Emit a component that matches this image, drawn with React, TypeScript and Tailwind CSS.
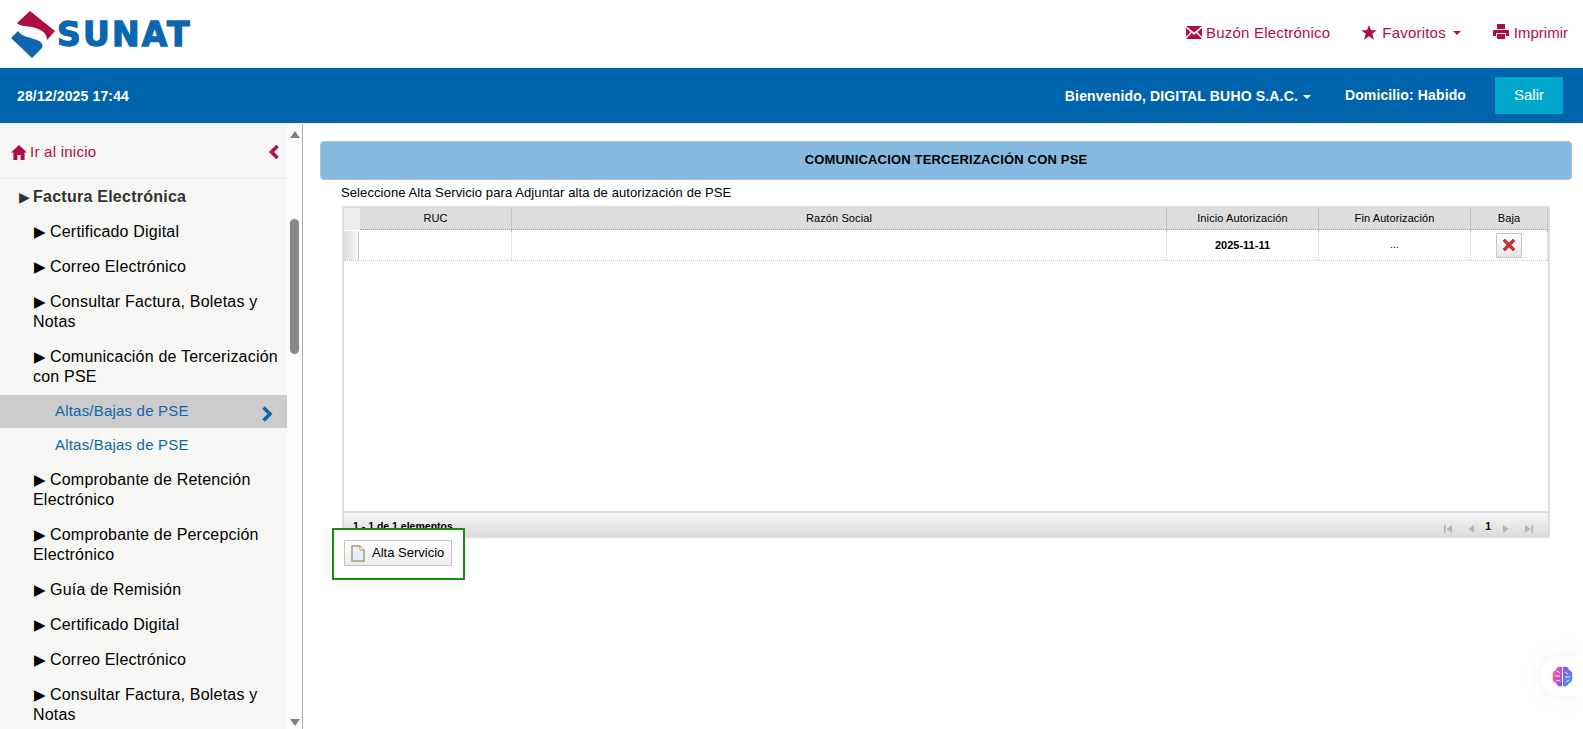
import { Fragment } from "react";

const sans = "font-['Liberation_Sans',Arial,sans-serif]";

const menuItems = [
  { label: "Certificado Digital" },
  { label: "Correo Electrónico" },
  { label: "Consultar Factura, Boletas y Notas" },
  { label: "Comunicación de Tercerización con PSE" },
];

const menuItemsAfter = [
  { label: "Comprobante de Retención Electrónico" },
  { label: "Comprobante de Percepción Electrónico" },
  { label: "Guía de Remisión" },
  { label: "Certificado Digital" },
  { label: "Correo Electrónico" },
  { label: "Consultar Factura, Boletas y Notas" },
];

const columns = [
  { label: "RUC", width: "w-[152px]" },
  { label: "Razón Social", width: "flex-1" },
  { label: "Inicio Autorización", width: "w-[152px]" },
  { label: "Fin Autorización", width: "w-[152px]" },
  { label: "Baja", width: "w-[77px]" },
];

function Logo() {
  return (
    <div className="flex items-center pl-[11px] pt-[1px]">
      <svg width="48" height="50" viewBox="11 9 48 50" className="shrink-0">
        <path d="M30 10 L55 30 L47 39 C47 31 40 28 32 26 C25 25 19 25 17 22 Z" fill="#ad0f43" />
        <path d="M11 37 L18 30 C21 35 28 36 34 38 C41 40 44 43 42 47 L32 57 Z" fill="#0f66ae" />
      </svg>
      <span className="ml-[-2px] mt-[-1px] font-['DejaVu_Sans',sans-serif] text-[33px] leading-none font-bold tracking-[2.2px] text-[#0a66ae] [-webkit-text-stroke:1.3px_#0a66ae]">
        SUNAT
      </span>
    </div>
  );
}

function Caret({ color }: { color: string }) {
  return (
    <span
      className="inline-block h-0 w-0 border-x-[4px] border-t-[4px] border-x-transparent"
      style={{ borderTopColor: color }}
    />
  );
}

function TopNav() {
  return (
    <div className="flex items-center pb-[2px] pr-[15px] text-[15px] text-[#ad0f43]">
      <svg width="16" height="13" viewBox="0 0 16 13" fill="#ad0f43" className="mr-[4px] mb-[2px]">
        <path d="M0 0 H16 L8 6.5 Z M0 2 L4.6 6 L0 11 Z M16 2 L11.4 6 L16 11 Z M0 13 L5.6 7 L8 9 L10.4 7 L16 13 Z" />
      </svg>
      <span className="tracking-[0.2px]">Buzón Electrónico</span>
      <svg width="16" height="15" viewBox="0 0 24 23" fill="#ad0f43" className="ml-[31px] mr-[5px] mb-[2px]">
        <path d="M12 0 L15.2 8 H24 L17 13.6 L19.6 22.6 L12 17.4 L4.4 22.6 L7 13.6 L0 8 H8.8 Z" />
      </svg>
      <span className="tracking-[0.2px]">Favoritos</span>
      <span className="ml-[7px] mr-[32px] flex">
        <Caret color="#ad0f43" />
      </span>
      <svg width="16" height="15" viewBox="0 0 16 15" fill="#ad0f43" className="mr-[5px] mb-[3px]">
        <path d="M4 0 H12 V5 H4 Z M0 6 H16 V12 H13 V9 H3 V12 H0 Z M4 10 H12 V15 H4 Z" />
      </svg>
      <span>Imprimir</span>
    </div>
  );
}

function BlueBar() {
  return (
    <div className="flex h-[55px] items-center justify-between bg-[#0064ad] pl-[17px] pr-[20px] text-white">
      <span className="mt-[2px] text-[14px] font-bold tracking-[0.14px]">28/12/2025 17:44</span>
      <div className="flex items-center">
        <span className="mt-[2px] text-[14px] font-bold tracking-[0.16px]">Bienvenido, DIGITAL BUHO S.A.C.</span>
        <span className="ml-[5px] mt-[2px] flex">
          <Caret color="#ffffff" />
        </span>
        <span className="ml-[34px] text-[14px] font-bold tracking-[0.12px]">Domicilio: Habido</span>
        <button className="ml-[29px] h-[37px] w-[68px] bg-[#00a6cc] text-[15px] text-white">Salir</button>
      </div>
    </div>
  );
}

function MenuItem({ label }: { label: string }) {
  return (
    <div className="py-[7.5px] pl-[33px] pr-[8px] text-[16px] leading-[20px] tracking-[0.2px] text-black">
      <span className="inline-block w-[17px] pl-[1px] text-[15px] leading-none">▶</span>
      {label}
    </div>
  );
}

function Sidebar() {
  return (
    <div className="flex h-full w-[303px] shrink-0 border-r border-[#b0b0b0]">
      <div className="h-full w-[287px] shrink-0 overflow-hidden bg-[#f6f6f4]">
        <div className="flex h-[55px] items-center justify-between border-b border-[#e8e8e8] pl-[11px] pr-[7px] pt-[2px] text-[#ad0f43]">
          <div className="flex items-center text-[15px] tracking-[0.25px]">
            <svg width="16" height="15" viewBox="0 0 16 15" fill="#ad0f43" className="mr-[3px]">
              <path d="M8 0 L16 7.5 H13.6 V15 H9.6 V10 H6.4 V15 H2.4 V7.5 H0 Z" />
            </svg>
            Ir al inicio
          </div>
          <svg width="10" height="14" viewBox="0 0 10 14" fill="none" stroke="#ad0f43" strokeWidth="3.6" className="mr-[1px]">
            <path d="M8.5 1 L2.5 7 L8.5 13" />
          </svg>
        </div>
        <div className="py-[7.5px] pl-[19px] text-[16px] leading-[20px] font-bold tracking-[0.25px] text-[#333333]">
          <span className="inline-block w-[14px] text-[14px] leading-none font-normal">▶</span>
          Factura Electrónica
        </div>
        {menuItems.map((item, i) => (
          <Fragment key={i}>
            <MenuItem label={item.label} />
          </Fragment>
        ))}
        <div className="mt-[0.5px] flex h-[33px] items-center justify-between bg-[#cccccc] pl-[55px] pr-[14px] text-[15px] tracking-[0.2px] text-[#0f66a8]">
          <span>Altas/Bajas de PSE</span>
          <svg width="12" height="16" viewBox="0 0 12 16" fill="none" stroke="#0f66a8" strokeWidth="3.6" className="mt-[6px]">
            <path d="M2.5 1.5 L9 8 L2.5 14.5" />
          </svg>
        </div>
        <div className="flex h-[34.5px] items-center pl-[55px] pt-[1px] text-[15px] tracking-[0.2px] text-[#0f66a8]">
          Altas/Bajas de PSE
        </div>
        {menuItemsAfter.map((item, i) => (
          <Fragment key={i}>
            <MenuItem label={item.label} />
          </Fragment>
        ))}
      </div>
      <div className="flex h-full flex-1 flex-col items-center justify-between bg-[#fbfbfb] pt-[7px] pb-[3px]">
        <div className="flex flex-col items-center">
          <span className="h-0 w-0 border-x-[5px] border-b-[7px] border-x-transparent border-b-[#808080]" />
          <span className="mt-[81px] h-[135px] w-[9px] rounded-[5px] bg-[#888888]" />
        </div>
        <span className="h-0 w-0 border-x-[5px] border-t-[7px] border-x-transparent border-t-[#808080]" />
      </div>
    </div>
  );
}

function DeleteButton() {
  return (
    <button className="flex h-[25px] w-[26px] items-center justify-center border border-[#c8c8c8] bg-gradient-to-b from-white to-[#e4e4e4]">
      <svg width="16" height="16" viewBox="0 0 16 16">
        <path d="M2 4 L4 2 L8 6 L12 2 L14 4 L10 8 L14 12 L12 14 L8 10 L4 14 L2 12 L6 8 Z" fill="#d22a2a" stroke="#a81c1c" strokeWidth="0.5" />
      </svg>
    </button>
  );
}

function PagerIcon({ d }: { d: string }) {
  return (
    <svg width="10" height="10" viewBox="0 0 10 10" fill="#b4b4b4">
      <path d={d} />
    </svg>
  );
}

function Grid() {
  return (
    <div className="flex h-[332px] flex-col border-2 border-[#dddddd] bg-white text-[10.5px] text-black">
      <div className="flex h-[22px] shrink-0">
        <div className="w-[16px] shrink-0 bg-[#eeeeee]" />
        <div className="flex flex-1 border-b border-dotted border-[#999999] bg-[#dddddd]">
          {columns.map((c) => (
            <div
              key={c.label}
              className={`${c.width} flex items-center justify-center border-r border-dotted border-[#aaaaaa] pb-[1px] text-[11px] tracking-[0.1px]`}
            >
              {c.label}
            </div>
          ))}
        </div>
      </div>
      <div className="flex h-[31px] shrink-0 border-b border-dotted border-[#c8c8b4]">
        <div className="mt-[1px] w-[15px] shrink-0 border-r border-[#cccccc] bg-gradient-to-r from-[#dddddd] to-[#f8f8f8]" />
        <div className="flex flex-1 pl-[1px]">
          <div className="w-[152px] border-r border-dotted border-[#c8c8b4]" />
          <div className="flex-1 border-r border-dotted border-[#c8c8b4]" />
          <div className="flex w-[152px] items-center justify-center border-r border-dotted border-[#c8c8b4] text-[11px] font-bold">
            2025-11-11
          </div>
          <div className="flex w-[152px] items-center justify-center border-r border-dotted border-[#c8c8b4]">...</div>
          <div className="flex w-[77px] items-center justify-center border-r border-dotted border-[#c8c8b4]">
            <DeleteButton />
          </div>
        </div>
      </div>
      <div className="flex-1" />
      <div className="flex h-[25px] shrink-0 items-start justify-between border-t-2 border-[#dddddd] bg-gradient-to-b from-[#f6f6f6] to-[#dcdcdc] pl-[9px] pr-[14px] pt-[6px]">
        <span className="font-bold">1 - 1 de 1 elementos</span>
        <div className="flex items-center">
          <PagerIcon d="M1 1 H2.5 V9 H1 Z M9 1 V9 L3.5 5 Z" />
          <span className="ml-[13px]">
            <PagerIcon d="M8 1 V9 L2.5 5 Z" />
          </span>
          <span className="ml-[9px] mb-[4px] font-bold text-black">1</span>
          <span className="ml-[10px]">
            <PagerIcon d="M2 1 V9 L7.5 5 Z" />
          </span>
          <span className="ml-[13px]">
            <PagerIcon d="M1 1 V9 L6.5 5 Z M7.5 1 H9 V9 H7.5 Z" />
          </span>
        </div>
      </div>
    </div>
  );
}

function Main() {
  return (
    <div className="h-full flex-1 bg-white pl-[17px] pr-[11px] pt-[17px]">
      <div className="flex h-[39px] items-center justify-center rounded-[4px] border border-[#a9c2d8] bg-[#85b9e0] pb-[1px] text-[13px] font-bold tracking-[0.18px] text-black">
        COMUNICACION TERCERIZACIÓN CON PSE
      </div>
      <div className="ml-[22px] mr-[22px]">
        <p className="ml-[-1px] h-[26px] pt-[5px] text-[13px] leading-[16px] tracking-[0.1px] text-black">
          Seleccione Alta Servicio para Adjuntar alta de autorización de PSE
        </p>
        <Grid />
        <div className="relative ml-[-10px] mt-[-10px] flex h-[52px] w-[133px] items-center border-2 border-[#1a8c0e] bg-white pb-[2px] pl-[10px]">
          <button className="flex h-[26px] w-[108px] items-center border border-[#c4c4c4] bg-gradient-to-b from-white to-[#ececec] pl-[6px] text-[13px] text-black">
            <svg width="14" height="17" viewBox="0 0 14 17" className="mr-[7px]">
              <path d="M1 1 H9 L13 5 V16 H1 Z" fill="#e6effa" stroke="#a89c74" strokeWidth="1.5" />
              <path d="M9 1 V5 H13" fill="#ffffff" stroke="#a89c74" strokeWidth="1" />
            </svg>
            Alta Servicio
          </button>
        </div>
      </div>
    </div>
  );
}

function BrainWidget() {
  return (
    <div className="absolute right-0 top-[656px] flex h-[40px] w-[42px] items-center rounded-l-[20px] bg-white pl-[11px] shadow-[0_0_24px_rgba(0,0,0,0.07)]">
      <svg width="21" height="21" viewBox="0 0 21 21">
        <defs>
          <linearGradient id="brainL" x1="0" y1="0" x2="1" y2="1">
            <stop offset="0" stopColor="#f59a3c" />
            <stop offset="0.4" stopColor="#e04fc0" />
            <stop offset="1" stopColor="#7a5cf0" />
          </linearGradient>
          <linearGradient id="brainR" x1="0" y1="0" x2="1" y2="1">
            <stop offset="0" stopColor="#8f55e8" />
            <stop offset="1" stopColor="#2f9cf5" />
          </linearGradient>
        </defs>
        <path d="M10 1 C7 0 4 1 4 4 C1 5 0 8 1 10 C0 13 1 16 4 17 C5 20 8 21 10 20 Z" fill="url(#brainL)" />
        <path d="M11 1 C14 0 17 1 17 4 C20 5 21 8 20 10 C21 13 20 16 17 17 C16 20 13 21 11 20 Z" fill="url(#brainR)" />
        <path d="M3 10 H8 M5 5 L8 7 M4 15 L8 14 M13 6 L16 8 M13 11 H18 M14 16 L17 14" stroke="#ffffff" strokeWidth="0.9" fill="none" />
      </svg>
    </div>
  );
}

export default function App() {
  return (
    <div className={`${sans} relative flex h-[729px] flex-col overflow-hidden bg-white`}>
      <div className="flex h-[68px] shrink-0 items-center justify-between bg-white">
        <Logo />
        <TopNav />
      </div>
      <BlueBar />
      <div className="flex min-h-0 flex-1 border-t border-[#e8eef4]">
        <Sidebar />
        <Main />
      </div>
      <BrainWidget />
    </div>
  );
}
